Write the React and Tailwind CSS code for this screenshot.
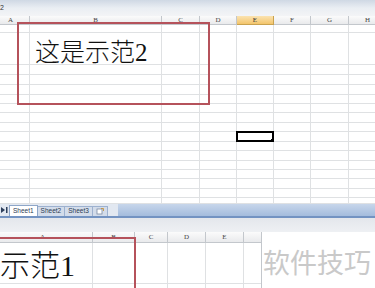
const topCols = ["A", "B", "C", "D", "E", "F", "G", "H", ""];
const topRowCount = 17;
const bottomCols = ["A", "B", "C", "D", "E", ""];

function HeaderCell({ label, active }) {
  return (
    <div
      className={
        active
          ? "flex items-center justify-center border-r border-b border-[#c9a24f] bg-gradient-to-b from-[#fbe3b0] to-[#f3c56a] text-[7px] leading-none text-[#333]"
          : "flex items-center justify-center border-r border-b border-[#c3c7cc] bg-gradient-to-b from-[#fbfbfb] to-[#e9eaec] text-[7px] leading-none text-[#444]"
      }
      style={{ fontFamily: '"Liberation Serif", serif' }}
    >
      {label}
    </div>
  );
}

function TopSheet() {
  const cells = [];
  for (let r = 0; r < topRowCount; r++) {
    topCols.forEach((c, i) => {
      const selected = r === 9 && c === "E";
      cells.push(
        <div key={r + "-" + i} className="relative border-r border-b border-[#dfe1e3]">
          {selected && (
            <div className="absolute -left-px -top-px -right-px -bottom-px border-2 border-black">
              <div className="absolute -right-[2px] -bottom-[2px] h-[3px] w-[3px] bg-black" />
            </div>
          )}
        </div>
      );
    });
  }

  return (
    <div className="relative h-[204px] overflow-hidden bg-white">
      {/* formula bar remains */}
      <div className="h-[16px] bg-gradient-to-b from-[#cfd8e4] via-[#eaeef3] to-[#f3f4f6]">
        <span
          className="block pt-[4px] text-[7px] leading-none text-[#333]"
          style={{ fontFamily: '"Liberation Sans", sans-serif' }}
        >
          2
        </span>
      </div>
      <div className="-ml-[8px] grid h-[9px] grid-cols-[38px_132px_38px_37px_37px_37px_38px_38px_40px]">
        {topCols.map((c, i) => (
          <HeaderCell key={i} label={c} active={c === "E"} />
        ))}
      </div>
      <div className="-ml-[8px] grid grid-cols-[38px_132px_38px_37px_37px_37px_38px_38px_40px] grid-rows-[8px_32px_10px_10px_10px_9px_9px_10px_9px_10px_9px_10px_9px_9px_10px_9px_6px]">
        {cells}
      </div>

      {/* text box shape */}
      <div className="absolute left-[17px] top-[22px] h-[83px] w-[193px] border-2 border-[#b5525b] pl-[16px] pt-[16px]">
        <span
          className="text-[25px] font-light leading-none text-[#111]"
          style={{ fontFamily: '"Liberation Serif", "Noto Sans CJK SC", serif' }}
        >
          这是示范2
        </span>
      </div>
    </div>
  );
}

function SheetTabs() {
  return (
    <div className="flex h-[14px] border-b-2 border-[#7393c2]">
      <div className="flex w-[118px] items-end bg-[#e2e8f1]">
        <svg width="9" height="10" viewBox="0 0 9 10" className="mb-[1px] shrink-0">
          <path d="M1 2 L5 5 L1 8 Z" fill="#2d3f5c" />
          <rect x="6" y="2" width="1.5" height="6" fill="#2d3f5c" />
        </svg>
        <div
          className="flex items-end text-[6.5px] leading-none text-[#2b3a52]"
          style={{ fontFamily: '"Liberation Sans", sans-serif' }}
        >
          <span className="flex h-[11px] items-center border border-b-0 border-[#8ea6c8] bg-white px-[3px]">Sheet1</span>
          <span className="flex h-[10px] items-center border-t border-r border-[#9db1cf] bg-[#d3dcea] px-[3px]">Sheet2</span>
          <span className="flex h-[10px] items-center border-t border-r border-[#9db1cf] bg-[#d3dcea] px-[3px]">Sheet3</span>
          <span className="flex h-[10px] items-center border-t border-r border-[#9db1cf] bg-[#d3dcea] px-[3px]">
            <svg width="8" height="7" viewBox="0 0 8 7">
              <rect x="1" y="1" width="5" height="5" fill="white" stroke="#7a8aa3" strokeWidth="0.8" />
              <path d="M5 0.5 L7.5 0.5 L7.5 3" stroke="#c48a2a" strokeWidth="0.8" fill="none" />
            </svg>
          </span>
        </div>
      </div>
      <div className="flex-1 bg-gradient-to-b from-[#c7d6eb] to-[#a4bcdd]" />
    </div>
  );
}

function BottomSheet() {
  return (
    <div className="relative flex-1 overflow-hidden bg-white">
      <div className="h-[14px] bg-gradient-to-b from-[#e4e7ec] to-[#eef0f3]" />
      <div className="flex">
        <div className="relative w-[262px] shrink-0 overflow-hidden border-r border-[#c3c7cc]">
          <div className="-ml-[7px] grid h-[11px] grid-cols-[100px_42px_33px_38px_38px_30px]">
            {bottomCols.map((c, i) => (
              <HeaderCell key={i} label={c} />
            ))}
          </div>
          <div className="-ml-[7px] grid grid-cols-[100px_42px_33px_38px_38px_30px] grid-rows-[41px_10px]">
            {bottomCols.map((c, i) => (
              <div key={"a" + i} className="border-r border-b border-[#dfe1e3]" />
            ))}
            {bottomCols.map((c, i) => (
              <div key={"b" + i} className="border-r border-[#dfe1e3]" />
            ))}
          </div>

          <div className="absolute -left-[10px] top-[5px] h-[80px] w-[146px] border-2 border-[#b5525b]" />
          <span
            className="absolute -left-[60px] top-[19px] whitespace-nowrap text-[30px] font-light leading-none text-[#111]"
            style={{ fontFamily: '"Liberation Serif", "Noto Sans CJK SC", serif' }}
          >
            这是示范1
          </span>
        </div>
        <div className="flex-1 bg-white pl-[1px] pt-[16px]">
          <span
            className="whitespace-nowrap text-[27px] leading-none text-[#c9c9c9]"
            style={{ fontFamily: '"Noto Sans CJK SC", sans-serif' }}
          >
            软件技巧
          </span>
        </div>
      </div>
    </div>
  );
}

export default function App() {
  return (
    <div className="flex h-[288px] w-[375px] flex-col overflow-hidden bg-white">
      <TopSheet />
      <SheetTabs />
      <BottomSheet />
    </div>
  );
}
